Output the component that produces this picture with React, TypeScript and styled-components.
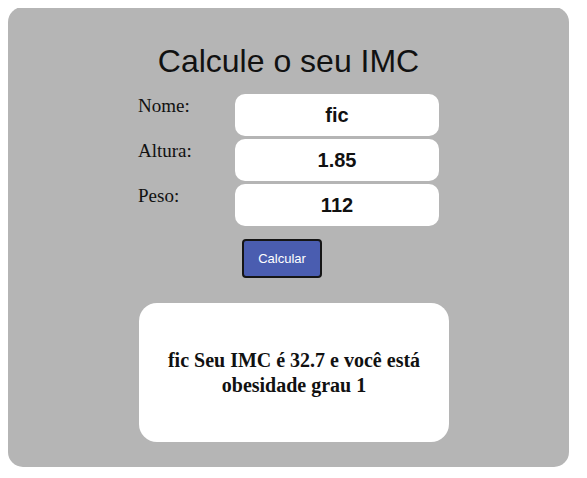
import { Fragment } from "react";
import styled, { createGlobalStyle } from "styled-components";

const GlobalStyle = createGlobalStyle`
  body {
    margin: 8px;
    background: #fff;
    font-family: "Liberation Serif", serif;
  }
`;

const Panel = styled.div`
  width: 561px;
  height: 460px;
  margin-top: -1px;
  background: #b5b5b5;
  border-radius: 15px;
  box-sizing: border-box;
  padding-top: 36px;
  display: flex;
  flex-direction: column;
  align-items: center;
`;

const Title = styled.h1`
  margin: 0;
  font-family: "Liberation Sans", Arial, sans-serif;
  font-weight: 400;
  font-size: 32px;
  line-height: 37px;
  color: #111;
`;

const Form = styled.div`
  margin-top: 14px;
  display: grid;
  grid-template-columns: 97px 204px;
  row-gap: 3px;
`;

const Label = styled.label`
  font-size: 19px;
  line-height: 22px;
  padding-top: 1px;
  color: #111;
`;

const Field = styled.div`
  height: 42px;
  background: #fff;
  border-radius: 10px;
  display: flex;
  align-items: center;
  justify-content: center;
  font-family: "Liberation Sans", Arial, sans-serif;
  font-weight: 700;
  font-size: 20px;
  color: #111;
`;

const Button = styled.button`
  margin-top: 13px;
  margin-left: -13px;
  width: 80px;
  height: 39px;
  background: #4a5db0;
  border: 2px solid #151515;
  border-radius: 4px;
  color: #fff;
  font-family: "Liberation Sans", Arial, sans-serif;
  font-size: 13px;
  padding: 0;
`;

const Result = styled.div`
  margin-top: 25px;
  margin-left: 11px;
  width: 310px;
  height: 139px;
  box-sizing: border-box;
  padding: 0 18px;
  background: #fff;
  border-radius: 18px;
  display: flex;
  align-items: center;
  justify-content: center;
  text-align: center;
  font-weight: 700;
  font-size: 20px;
  line-height: 25px;
  color: #111;
`;

const rows = [
  { label: "Nome:", value: "fic" },
  { label: "Altura:", value: "1.85" },
  { label: "Peso:", value: "112" },
];

export default function App() {
  return (
    <>
      <GlobalStyle />
      <Panel>
        <Title>Calcule o seu IMC</Title>
        <Form>
          {rows.map((r) => (
            <Fragment key={r.label}>
              <Label>{r.label}</Label>
              <Field>{r.value}</Field>
            </Fragment>
          ))}
        </Form>
        <Button>Calcular</Button>
        <Result>fic Seu IMC é 32.7 e você está obesidade grau 1</Result>
      </Panel>
    </>
  );
}
